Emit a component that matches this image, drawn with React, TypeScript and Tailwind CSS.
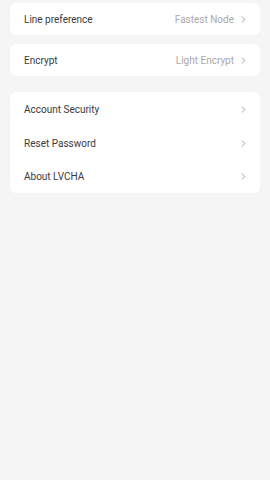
import { ChevronRight } from 'lucide-react';

interface RowProps {
  label: string;
  value?: string;
  className?: string;
}

function Row({ label, value, className }: RowProps) {
  return (
    <div className={`flex items-center justify-between pl-[14px] pr-[11px] ${className ?? ''}`}>
      <span className="text-[10px] text-[#3a3a3a]">{label}</span>
      <div className="flex items-center gap-[4px]">
        {value && <span className="text-[10px] text-[#a8a8a8]">{value}</span>}
        <ChevronRight className="w-[11px] h-[11px] text-[#808080]" strokeWidth={1.6} />
      </div>
    </div>
  );
}

export default function App() {
  return (
    <div
      className="min-h-[480px] w-[270px] bg-[#f5f5f5] px-[10px] pt-[3px] flex flex-col"
      style={{ fontFamily: 'Roboto, "Noto Sans", sans-serif' }}
    >
      {/* Line preference */}
      <div className="bg-white rounded-[6px]">
        <Row label="Line preference" value="Fastest Node" className="h-[32px]" />
      </div>

      {/* Encrypt */}
      <div className="bg-white rounded-[6px] mt-[9px]">
        <Row label="Encrypt" value="Light Encrypt" className="h-[32px]" />
      </div>

      {/* Account settings */}
      <div className="bg-white rounded-[6px] mt-[16px] py-[1px]">
        <Row label="Account Security" className="h-[33px]" />
        <Row label="Reset Password" className="h-[34px]" />
        <Row label="About LVCHA" className="h-[32px]" />
      </div>
    </div>
  );
}
